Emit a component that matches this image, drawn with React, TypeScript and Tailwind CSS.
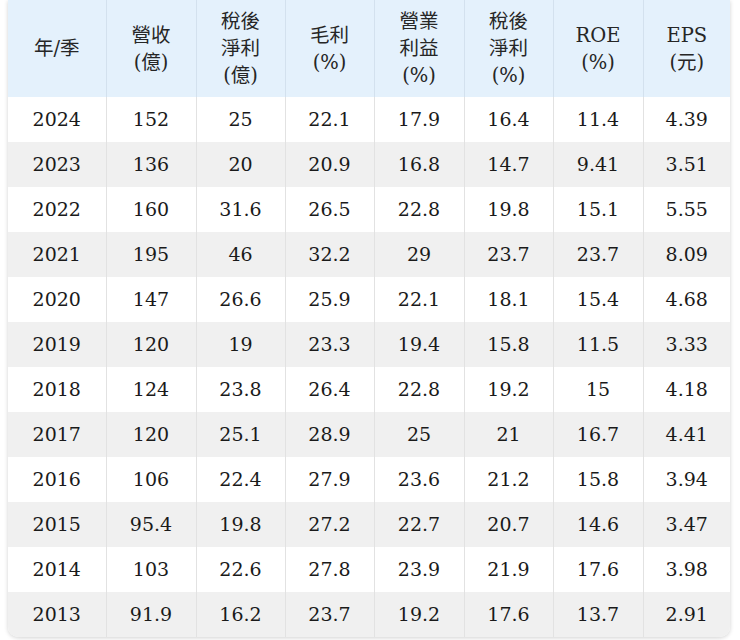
import React from "react";

const headers: string[][] = [
  ["年/季"],
  ["營收", "(億)"],
  ["稅後", "淨利", "(億)"],
  ["毛利", "(%)"],
  ["營業", "利益", "(%)"],
  ["稅後", "淨利", "(%)"],
  ["ROE", "(%)"],
  ["EPS", "(元)"],
];

const rows: string[][] = [
  ["2024", "152", "25", "22.1", "17.9", "16.4", "11.4", "4.39"],
  ["2023", "136", "20", "20.9", "16.8", "14.7", "9.41", "3.51"],
  ["2022", "160", "31.6", "26.5", "22.8", "19.8", "15.1", "5.55"],
  ["2021", "195", "46", "32.2", "29", "23.7", "23.7", "8.09"],
  ["2020", "147", "26.6", "25.9", "22.1", "18.1", "15.4", "4.68"],
  ["2019", "120", "19", "23.3", "19.4", "15.8", "11.5", "3.33"],
  ["2018", "124", "23.8", "26.4", "22.8", "19.2", "15", "4.18"],
  ["2017", "120", "25.1", "28.9", "25", "21", "16.7", "4.41"],
  ["2016", "106", "22.4", "27.9", "23.6", "21.2", "15.8", "3.94"],
  ["2015", "95.4", "19.8", "27.2", "22.7", "20.7", "14.6", "3.47"],
  ["2014", "103", "22.6", "27.8", "23.9", "21.9", "17.6", "3.98"],
  ["2013", "91.9", "16.2", "23.7", "19.2", "17.6", "13.7", "2.91"],
];

export default function App() {
  return (
    <div className="h-[640px] w-[740px] overflow-hidden bg-white pl-2 font-['DejaVu_Serif','Noto_Sans_CJK_TC',serif]">
      <div className="w-[722px] overflow-hidden rounded-b-[10px] shadow-[0_1px_4px_rgba(0,0,0,0.18)]">
        <table className="w-full table-fixed border-collapse text-center">
          <colgroup>
            <col className="w-[98px]" />
            <col className="w-[90px]" />
            <col className="w-[89px]" />
            <col className="w-[89px]" />
            <col className="w-[90px]" />
            <col className="w-[89px]" />
            <col className="w-[90px]" />
            <col className="w-[87px]" />
          </colgroup>
          <thead>
            <tr className="h-[97px] bg-[#e4f1fc]">
              {headers.map((lines, i) => (
                <th
                  key={i}
                  className="border-l border-[#d3e1ee] text-[19.5px] font-normal leading-[27px] text-[#262626] first:border-l-0"
                >
                  {lines.map((l, j) => (
                    <div key={j}>{l}</div>
                  ))}
                </th>
              ))}
            </tr>
          </thead>
          <tbody>
            {rows.map((r, i) => (
              <tr key={r[0]} className={i % 2 === 0 ? "h-[45px] bg-white" : "h-[45px] bg-[#f0f0f0]"}>
                {r.map((c, j) => (
                  <td
                    key={j}
                    className="border-l border-[#e2e2e2] text-[19px] text-[#1a1a1a] first:border-l-0"
                  >
                    {c}
                  </td>
                ))}
              </tr>
            ))}
          </tbody>
        </table>
      </div>
    </div>
  );
}
